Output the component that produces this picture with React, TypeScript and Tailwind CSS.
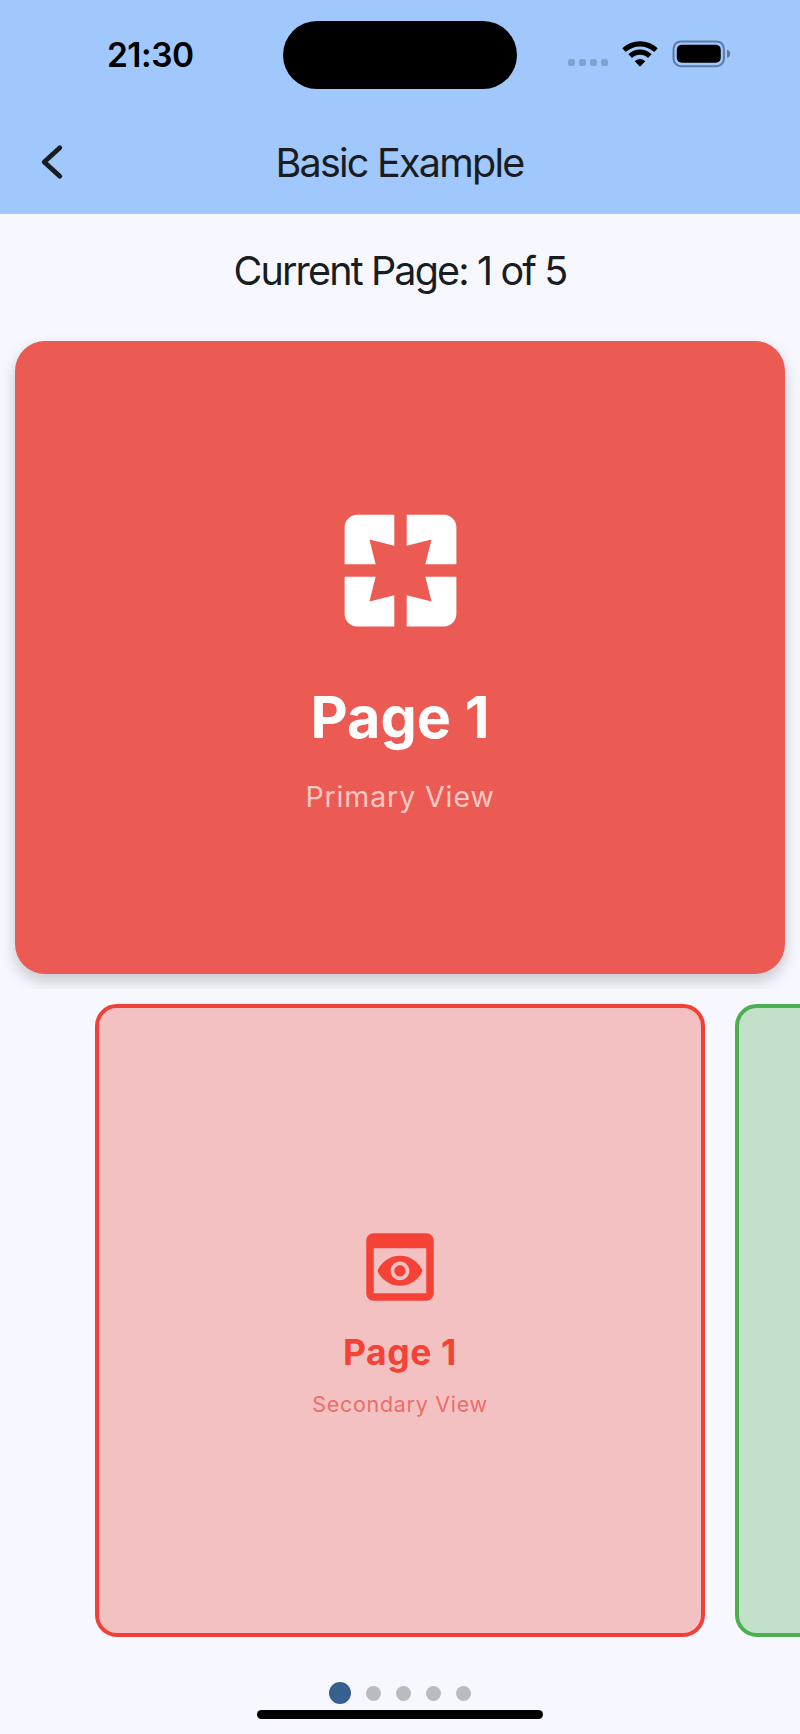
import React from "react";

function StatusBar() {
  return (
    <div className="flex h-[110px] items-start pl-[107px]">
      <div className="mt-[34px] w-[88px] whitespace-nowrap text-[33.5px] font-semibold leading-[42px] tracking-[-0.5px] text-black">
        21:30
      </div>
      <div className="ml-[88px] mt-[21px] h-[68px] w-[234px] rounded-full bg-black" />
      <div className="ml-[51px] mt-[59px] flex gap-[4px]">
        {[0, 1, 2, 3].map((i) => (
          <span key={i} className="h-[7px] w-[7px] rounded-[2.5px] bg-[#7ca3cd]" />
        ))}
      </div>
      <svg className="ml-[14px] mt-[40px]" width="36" height="27" viewBox="0 0 36 27" fill="none">
        <path d="M2 10.2 A23.4 23.4 0 0 1 34 10.2" stroke="#000" strokeWidth="5.2" />
        <path d="M8.2 16.2 A14 14 0 0 1 27.8 16.2" stroke="#000" strokeWidth="5.2" />
        <path d="M12.6 21.2 Q18 16.6 23.4 21.2 L18.6 26.1 Q18 26.7 17.4 26.1 Z" fill="#000" />
      </svg>
      <svg className="ml-[14px] mt-[40px]" width="60" height="28" viewBox="0 0 60 28" fill="none">
        <rect x="1.5" y="1.4" width="50.4" height="24.8" rx="7.4" stroke="#5d7ba3" strokeWidth="2" />
        <rect x="4.8" y="4.8" width="44" height="18" rx="5" fill="#000" />
        <path d="M55 9.8 C57.2 10.4 58.2 11.8 58.2 13.8 C58.2 15.8 57.2 17.2 55 17.8 Z" fill="#5d7ba3" />
      </svg>
    </div>
  );
}

function NavBar() {
  return (
    <div className="grid h-[104px] grid-cols-[100px_1fr_100px] items-center">
      <svg className="ml-[40px]" width="24" height="40" viewBox="0 0 24 40" fill="none">
        <path d="M19.8 5.8 L4.2 20 L19.8 34.2" stroke="#191c20" strokeWidth="4.8" strokeLinecap="round" strokeLinejoin="round" />
      </svg>
      <h1 className="pr-[1px] pt-[2px] text-center text-[39.5px] leading-[52px] tracking-[-1.75px] text-[#191c20]">Basic Example</h1>
    </div>
  );
}

function PrimaryPage() {
  return (
    <div className="h-[663px] overflow-hidden p-[15px]">
      <div className="flex h-[633px] flex-col items-center rounded-[30px] bg-[#eb5b53] pt-[155px] shadow-[0_7px_15px_rgba(0,0,0,0.2)]">
        <svg width="149" height="149" viewBox="0 0 24 24" fill="#fff">
          <path d="M3 5v6h5L7 7l4 1V3H5c-1.1 0-2 .9-2 2zm5 8H3v6c0 1.1.9 2 2 2h6v-5l-4 1 1-4zm9 4l-4-1v5h6c1.1 0 2-.9 2-2v-6h-5l1 4zm2-14h-6v5l4-1-1 4h5V5c0-1.1-.9-2-2-2z" />
        </svg>
        <h2 className="mt-[37px] text-[57.5px] font-bold leading-[70px] tracking-[0px] text-white [font-optical-sizing:none]">Page 1</h2>
        <p className="mt-[28px] text-[28.5px] leading-[34px] tracking-[0.9px] text-[#f8c8c4]">Primary View</p>
      </div>
    </div>
  );
}

function SecondaryPages() {
  return (
    <div className="flex h-[663px] gap-[30px] overflow-hidden py-[15px] pl-[95px]">
      <div className="flex w-[610px] shrink-0 flex-col items-center rounded-[22px] border-4 border-[#f04038] bg-[#f4c1c3] pt-[214px] text-[#f44336]">
        <svg width="90" height="90" viewBox="0 0 24 24" fill="currentColor">
          <path d="M19 3H5c-1.11 0-2 .9-2 2v14c0 1.1.89 2 2 2h14c1.1 0 2-.9 2-2V5c0-1.1-.89-2-2-2zm0 16H5V7h14v12zm-5.5-6c0 .83-.67 1.5-1.5 1.5s-1.5-.67-1.5-1.5.67-1.5 1.5-1.5 1.5.67 1.5 1.5zM12 9c-2.73 0-5.06 1.66-6 4 .94 2.34 3.27 4 6 4s5.06-1.66 6-4c-.94-2.34-3.27-4-6-4zm0 6.5c-1.38 0-2.5-1.12-2.5-2.5s1.12-2.5 2.5-2.5 2.5 1.12 2.5 2.5-1.12 2.5-2.5 2.5z" />
        </svg>
        <h2 className="mt-[20px] text-[35.5px] font-bold leading-[42px] tracking-[0.6px] [font-optical-sizing:none]">Page 1</h2>
        <p className="mt-[17px] text-[21.5px] leading-[26px] tracking-[0.7px] text-[#ea6e6a]">Secondary View</p>
      </div>
      <div className="w-[610px] shrink-0 rounded-[22px] border-4 border-[#4caf50] bg-[#c3e1ca]" />
    </div>
  );
}

export default function App() {
  return (
    <div className="flex h-[1734px] w-[800px] flex-col overflow-hidden bg-[#f7f8ff] font-['Inter',sans-serif]">
      <header className="h-[214px] shrink-0 bg-[#a0c8fd]">
        <StatusBar />
        <NavBar />
      </header>
      <p className="h-[112px] text-center text-[39.5px] leading-[114px] tracking-[-1.85px] text-[#191c20]">
        Current Page: 1 of 5
      </p>
      <PrimaryPage />
      <SecondaryPages />
      <div className="flex h-[58px] items-center justify-center gap-[15px] pt-[24px]">
        <span className="h-[22px] w-[22px] rounded-full bg-[#36618e]" />
        {[2, 3, 4, 5].map((n) => (
          <span key={n} className="h-[15px] w-[15px] rounded-full bg-[#babbbf]" />
        ))}
      </div>
      <div className="mx-auto h-[9px] w-[286px] rounded-full bg-black" />
    </div>
  );
}
